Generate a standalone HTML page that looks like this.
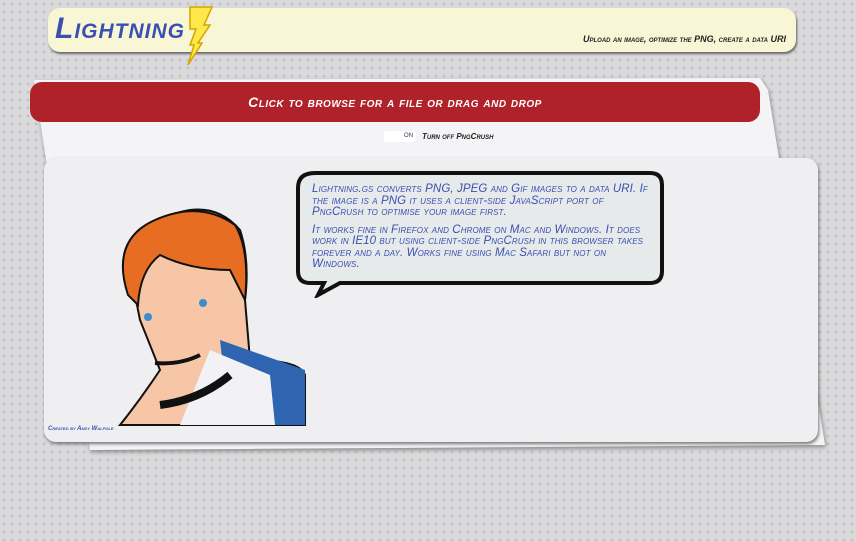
<!DOCTYPE html>
<html><head><meta charset="utf-8"><style>
body{margin:0;width:856px;height:541px;overflow:hidden;background:#dadadc;background-image:radial-gradient(circle,#c4c4c6 1.4px,transparent 1.6px);background-size:8px 8px;font-family:"Liberation Sans",sans-serif;position:relative}
.a{position:absolute}
.sc{font-style:italic;font-variant:small-caps;font-weight:bold}
</style></head><body>
<div class="a" style="left:48px;top:8px;width:748px;height:44px;background:#f9f6d6;border-radius:12px;box-shadow:1px 2px 2px #666"></div>
<div class="a sc" style="left:55px;top:12px;font-size:30px;color:#3a4fb0;letter-spacing:1px">Lightning</div>
<svg class="a" style="left:182px;top:5px" width="36" height="60"><path d="M8 2 L30 2 L22 20 L28 20 L16 38 L20 38 L6 60 L12 40 L8 40 L14 24 L8 24 Z" fill="#ffe94a" stroke="#d6a400" stroke-width="1.5"/></svg>
<div class="a sc" style="right:70px;top:34px;font-size:9px;color:#222">Upload an image, optimize the PNG, create a data URI</div>
<svg class="a" style="left:0;top:0" width="856" height="541"><polygon points="34,80 760,78 768,90 825,445 90,450 40,120" fill="#f4f4f6" filter="drop-shadow(1px 2px 2px #888)"/></svg>
<div class="a" style="left:30px;top:82px;width:730px;height:40px;background:#b0222a;border-radius:12px"></div>
<div class="a sc" style="left:30px;width:730px;top:94px;text-align:center;color:#fff;font-size:14px;letter-spacing:0.5px">Click to browse for a file or drag and drop</div>
<div class="a" style="left:384px;top:131px;width:32px;height:11px;background:#fff;border-radius:3px;font-size:6px;color:#336;text-align:right;line-height:11px;padding-right:3px;box-sizing:border-box">ON</div>
<div class="a sc" style="left:422px;top:132px;font-size:8px;color:#222">Turn off PngCrush</div>
<div class="a" style="left:44px;top:158px;width:774px;height:284px;background:#efeff1;border-radius:12px;box-shadow:1px 2px 3px #777"></div>
<svg class="a" style="left:100px;top:200px" width="210" height="226">
<path d="M30 70 Q20 30 60 20 Q110 -5 140 30 Q150 60 145 100 L150 160 Q200 160 205 175 L205 225 L20 225 Q40 200 60 170 L40 120 Z" fill="#f6c6a6" stroke="#111" stroke-width="2"/>
<path d="M120 140 L205 170 L205 225 L130 225 Z" fill="#2f64b0"/>
<path d="M110 150 L170 175 L175 225 L80 225 Z" fill="#f2f2f6"/>
<path d="M28 95 Q10 40 55 20 Q100 0 135 25 Q150 50 145 100 L130 70 Q90 70 60 55 Q40 70 38 105 Z" fill="#e66d22" stroke="#111" stroke-width="2"/>
<circle cx="48" cy="117" r="4" fill="#3a8ed0"/><circle cx="103" cy="103" r="4" fill="#3a8ed0"/>
<path d="M55 163 Q80 165 100 155" stroke="#111" stroke-width="4" fill="none"/>
<path d="M60 205 Q100 200 130 175" stroke="#111" stroke-width="8" fill="none"/>
</svg>
<div class="a sc" style="left:48px;top:426px;font-size:6px;color:#3a4fb0">Created by Andy Walpole</div>
<svg class="a" style="left:290px;top:168px" width="380" height="130"><path d="M25 5 H360 Q372 5 372 17 V103 Q372 115 360 115 H50 L28 127 L34 115 H20 Q8 115 8 103 V20 Q8 5 25 5 Z" fill="#e7eaea" stroke="#111" stroke-width="4"/></svg>
<div class="a sc" style="left:312px;top:184px;width:345px;font-size:11.5px;line-height:11.5px;color:#3a4fb0;font-weight:normal;letter-spacing:0.1px">Lightning.gs converts PNG, JPEG and Gif images to a data URI. If the image is a PNG it uses a client-side JavaScript port of PngCrush to optimise your image first.<div style="height:6px"></div>It works fine in Firefox and Chrome on Mac and Windows. It does work in IE10 but using client-side PngCrush in this browser takes forever and a day. Works fine using Mac Safari but not on Windows.</div>
</body></html>
